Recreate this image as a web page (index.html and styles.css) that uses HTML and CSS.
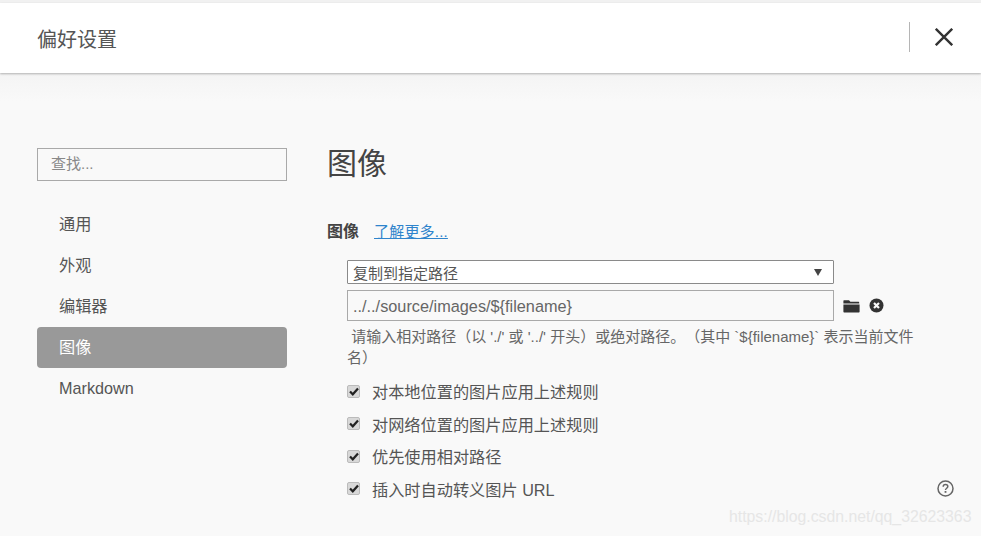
FILE: index.html
```html
<!DOCTYPE html>
<html lang="zh">
<head>
<meta charset="utf-8">
<title>偏好设置</title>
<link rel="stylesheet" href="styles.css">
</head>
<body>
<div class="window">
  <header class="titlebar">
    <div class="title">偏好设置</div>
    <div class="divider"></div>
    <svg class="close" width="18" height="18" viewBox="0 0 18 18"><path d="M.8.8 17.200 17.200M17.200.8.8 17.200" stroke="#333" stroke-width="2.400" fill="none"/></svg>
  </header>
  <div class="body">
    <aside class="sidebar">
      <div class="search">查找...</div>
      <nav class="nav">
        <div class="nav-item">通用</div>
        <div class="nav-item">外观</div>
        <div class="nav-item">编辑器</div>
        <div class="nav-item active">图像</div>
        <div class="nav-item">Markdown</div>
      </nav>
    </aside>
    <main class="main">
      <h1 class="heading">图像</h1>
      <div class="section-row">
        <span class="section-label">图像</span>
        <a class="more" href="#">了解更多...</a>
      </div>
      <div class="group">
        <div class="select"><span>复制到指定路径</span><span class="arrow"></span></div>
        <div class="path-row">
          <div class="path">../../source/images/${filename}</div>
          <svg class="folder" width="17" height="14" viewBox="0 0 17 14"><path d="M1 1.200h5l1.400 1.600h8.200c.4 0 .6.3.6.6v1H.4V1.800c0-.3.3-.6.6-.6ZM.4 5.400h16.200v7.400c0 .4-.3.7-.7.7H1.100c-.4 0-.7-.3-.7-.7Z" fill="#333"/></svg>
          <svg class="clear" width="15" height="15" viewBox="0 0 15 15"><circle cx="7.500" cy="7.500" r="7" fill="#333"/><path d="M5 5l5 5M10 5l-5 5" stroke="#f9f9f9" stroke-width="2.200"/></svg>
        </div>
        <p class="help">&nbsp;请输入相对路径（以 './' 或 '../' 开头）或绝对路径。（其中 `${filename}` 表示当前文件名）</p>
        <div class="check-row"><span class="box"><svg width="10" height="9" viewBox="0 0 10 9"><path d="M1 4.500 3.800 7.300 9 1.500" stroke="#222" stroke-width="2.200" fill="none"/></svg></span><span>对本地位置的图片应用上述规则</span></div>
        <div class="check-row"><span class="box"><svg width="10" height="9" viewBox="0 0 10 9"><path d="M1 4.500 3.800 7.300 9 1.500" stroke="#222" stroke-width="2.200" fill="none"/></svg></span><span>对网络位置的图片应用上述规则</span></div>
        <div class="check-row"><span class="box"><svg width="10" height="9" viewBox="0 0 10 9"><path d="M1 4.500 3.800 7.300 9 1.500" stroke="#222" stroke-width="2.200" fill="none"/></svg></span><span>优先使用相对路径</span></div>
        <div class="check-row"><span class="box"><svg width="10" height="9" viewBox="0 0 10 9"><path d="M1 4.500 3.800 7.300 9 1.500" stroke="#222" stroke-width="2.200" fill="none"/></svg></span><span>插入时自动转义图片 URL</span>
          <svg class="question" width="17" height="17" viewBox="0 0 17 17"><circle cx="8.500" cy="8.500" r="7.500" fill="none" stroke="#666" stroke-width="1.500"/><path d="M6.200 6.700c0-1.400 1-2.200 2.300-2.200s2.300.8 2.300 2c0 1.800-2.300 1.700-2.300 3.500" fill="none" stroke="#666" stroke-width="1.500"/><rect x="7.600" y="11" width="1.800" height="1.800" fill="#666"/></svg>
        </div>
      </div>
    </main>
  </div>
  <div class="watermark">https://blog.csdn.net/qq_32623363</div>
</div>
</body>
</html>
```
FILE: styles.css
```css
* { box-sizing: border-box; }
html, body { margin: 0; height: 100%; }
body {
  font-family: "Liberation Sans", "Noto Sans CJK SC", sans-serif;
  color: #555;
  background: #f9f9f9;
  overflow: hidden;
  text-spacing-trim: space-all;
}
.window {
  position: relative;
  height: 536px;
  padding-top: 3px;
  background: #f1f1f1;
  display: flex;
  flex-direction: column;
}
.titlebar {
  height: 70px;
  flex: none;
  background: #fff;
  display: flex;
  align-items: center;
  padding: 0 28px 0 37px;
  box-shadow: 0 1px 2px rgba(0,0,0,.28);
  position: relative;
  z-index: 1;
}
.title {
  flex: 1;
  font-size: 20px;
  color: #555;
}
.divider {
  width: 1px;
  height: 30px;
  margin-right: 25px;
  margin-top: -3px;
  background: #b5b5b5;
}
.close { margin-top: -3px; }
.body {
  flex: 1;
  display: flex;
  padding: 75px 0 0 37px;
  background: linear-gradient(#f4f4f4, #f9f9f9 28px);
}
.sidebar { width: 250px; flex: none; }
.search {
  height: 33px;
  border: 1px solid #a9a9a9;
  padding-left: 13px;
  font-size: 15px;
  line-height: 30px;
  color: #888;
}
.nav { margin-top: 23px; }
.nav-item {
  height: 41px;
  line-height: 41px;
  padding-left: 22px;
  font-size: 16.200px;
  color: #555;
  border-radius: 4px;
}
.nav-item.active { background: #999; color: #fff; }
.main { margin-left: 40px; width: 590px; }
.heading {
  margin: 0;
  font-size: 30px;
  line-height: 32px;
  font-weight: 400;
  color: #444;
}
.section-row {
  margin-top: 38px;
  height: 24px;
  display: flex;
  align-items: center;
  gap: 15px;
}
.section-label { font-size: 16px; font-weight: 700; color: #444; }
.more { font-size: 15px; letter-spacing: .2px; color: #2f84cc; text-decoration: underline; }
.group { margin: 18px 0 0 20px; }
.select {
  width: 487px;
  height: 24px;
  background: #fff;
  border: 1px solid #8a8a8a;
  border-radius: 1px;
  padding: 0 11px 0 5px;
  display: flex;
  justify-content: space-between;
  align-items: center;
  font-size: 15px;
  color: #555;
}
.arrow {
  width: 0;
  height: 0;
  border: 4px solid transparent;
  border-top: 7px solid #444;
  border-bottom: 0;
}
.path-row {
  margin-top: 6px;
  display: flex;
  align-items: center;
}
.path {
  width: 487px;
  height: 31px;
  border: 1px solid #a9a9a9;
  padding-left: 5px;
  line-height: 30px;
  font-size: 16.300px;
  color: #666;
}
.folder { margin-left: 9px; }
.clear { margin-left: 9px; }
.help {
  margin: 5px 0 0;
  width: 570px;
  font-size: 15px;
  line-height: 21px;
  color: #666;
}
.check-row {
  height: 32.500px;
  display: flex;
  align-items: center;
  font-size: 16.200px;
  color: #555;
  width: 607px;
}
.help + .check-row { margin-top: 7px; }
.box {
  width: 13px;
  height: 13px;
  margin-right: 12px;
  flex: none;
  background: #d8d8d8;
  border: 1px solid #bbb;
  border-radius: 2px;
  display: flex;
  align-items: center;
  justify-content: center;
}
.question { margin-left: auto; }
.watermark {
  position: absolute;
  left: 729px;
  top: 507px;
  font-size: 15.800px;
  line-height: 20px;
  color: #e6e6e6;
  white-space: nowrap;
}
```
